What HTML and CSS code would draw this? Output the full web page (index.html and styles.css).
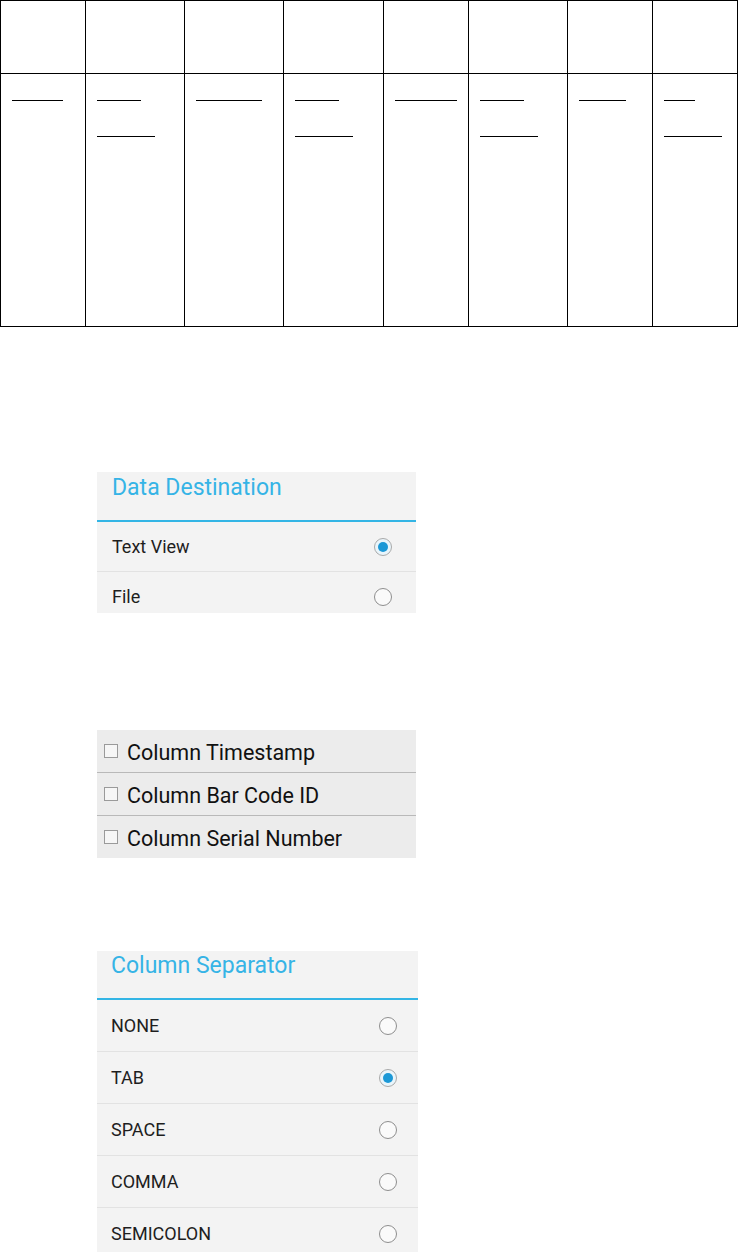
FILE: index.html
```html
<!DOCTYPE html>
<html lang="en">
<head>
    <meta charset="UTF-8">
    <meta name="viewport" content="width=device-width, initial-scale=1.0">
    <title>Scan Output Settings</title>
    <link rel="stylesheet" href="styles.css">
</head>
<body>

    <table class="grid">
        <colgroup>
            <col class="col-s">
            <col class="col-m">
            <col class="col-m">
            <col class="col-l">
            <col class="col-s">
            <col class="col-m">
            <col class="col-s">
            <col class="col-s">
        </colgroup>
        <tr class="head-row">
            <td></td><td></td><td></td><td></td><td></td><td></td><td></td><td></td>
        </tr>
        <tr class="body-row">
            <td><a href="#" class="ref w51"></a></td>
            <td><a href="#" class="ref w44"></a><a href="#" class="ref w58"></a></td>
            <td><a href="#" class="ref w66"></a></td>
            <td><a href="#" class="ref w44"></a><a href="#" class="ref w58"></a></td>
            <td><a href="#" class="ref w62"></a></td>
            <td><a href="#" class="ref w44"></a><a href="#" class="ref w58"></a></td>
            <td><a href="#" class="ref w47"></a></td>
            <td><a href="#" class="ref w31"></a><a href="#" class="ref w58"></a></td>
        </tr>
    </table>

    <!-- Data Destination dialog -->
    <div class="shot shot-dest">
        <div class="dlg-title">Data Destination</div>
        <ul class="choices">
            <li><span>Text View</span><span class="radio on"></span></li>
            <li><span>File</span><span class="radio"></span></li>
        </ul>
    </div>

    <!-- Column options -->
    <div class="shot shot-cols">
        <ul class="checks">
            <li><span class="box"></span><span class="check-label">Column Timestamp</span></li>
            <li><span class="box"></span><span class="check-label">Column Bar Code ID</span></li>
            <li><span class="box"></span><span class="check-label">Column Serial Number</span></li>
        </ul>
    </div>

    <!-- Column Separator dialog -->
    <div class="shot shot-sep">
        <div class="dlg-title">Column Separator</div>
        <ul class="choices">
            <li><span>NONE</span><span class="radio"></span></li>
            <li><span>TAB</span><span class="radio on"></span></li>
            <li><span>SPACE</span><span class="radio"></span></li>
            <li><span>COMMA</span><span class="radio"></span></li>
            <li><span>SEMICOLON</span><span class="radio"></span></li>
        </ul>
    </div>

</body>
</html>
```

FILE: styles.css
```css
body {
    margin: 0;
    background-color: #fff;
    font-family: Roboto, "Noto Sans", sans-serif;
}

/* tabloda boş bağlantılar */
.grid {
    border-collapse: collapse;
    table-layout: fixed;
    width: 738px;
}
.col-s { width: 85px; }
.col-m { width: 99px; }
.col-l { width: 100px; }
.grid td {
    border: 1px solid #000;
    padding: 0 11px;
    vertical-align: top;
}
.head-row td { height: 72px; }
.body-row td { height: 252px; }

.ref {
    display: block;
    height: 26px;
    border-bottom: 1px solid #000;
}
.ref + .ref { margin-top: 9px; }
.w31 { width: 31px; }
.w44 { width: 44px; }
.w47 { width: 47px; }
.w51 { width: 51px; }
.w58 { width: 58px; }
.w62 { width: 62px; }
.w66 { width: 66px; }

/* ekran görüntüsü kutuları */
.shot {
    margin-left: 97px;
    width: 319px;
    overflow: hidden;
    background-color: #f3f3f3;
}
.shot-dest {
    margin-top: 145px;
    height: 141px;
}
.shot-cols {
    margin-top: 117px;
    height: 128px;
    background-color: #ececec;
}
.shot-sep {
    margin-top: 93px;
    width: 321px;
    height: 301px;
}

.dlg-title {
    color: #36b4e6;
    font-size: 23px;
    line-height: 27px;
    padding: 2px 15px 19px;
    border-bottom: 2px solid #33b5e5;
}
.shot-sep .dlg-title {
    padding: 1px 14px 19px;
}

.choices,
.checks {
    list-style: none;
    margin: 0;
    padding: 0;
}
.choices li {
    display: flex;
    align-items: center;
    justify-content: space-between;
    height: 49px;
    padding: 0 24px 0 15px;
    font-size: 18px;
    color: #1e1e1e;
    border-bottom: 1px solid #e2e2e2;
}
.shot-sep .choices li {
    height: 51px;
    padding: 0 21px 0 14px;
}

.radio {
    display: flex;
    align-items: center;
    justify-content: center;
    width: 16px;
    height: 16px;
    border: 1px solid #8e8e8e;
    border-radius: 50%;
    background-color: #fafafa;
}
.radio.on {
    border-color: #a9a9a9;
    background-color: #e9f5fb;
}
.radio.on::after {
    content: "";
    width: 10px;
    height: 10px;
    border-radius: 50%;
    background-color: #1b98d6;
}

.checks li {
    display: flex;
    align-items: center;
    gap: 9px;
    height: 42px;
    padding-left: 7px;
    font-size: 21.5px;
    color: #111;
    border-bottom: 1px solid #b9b9b9;
}
.checks li:last-child { border-bottom: none; }
.check-label { padding-top: 3px; }
.box {
    width: 12px;
    height: 12px;
    border: 1px solid #9a9a9a;
    background-color: #f6f6f6;
}
```
